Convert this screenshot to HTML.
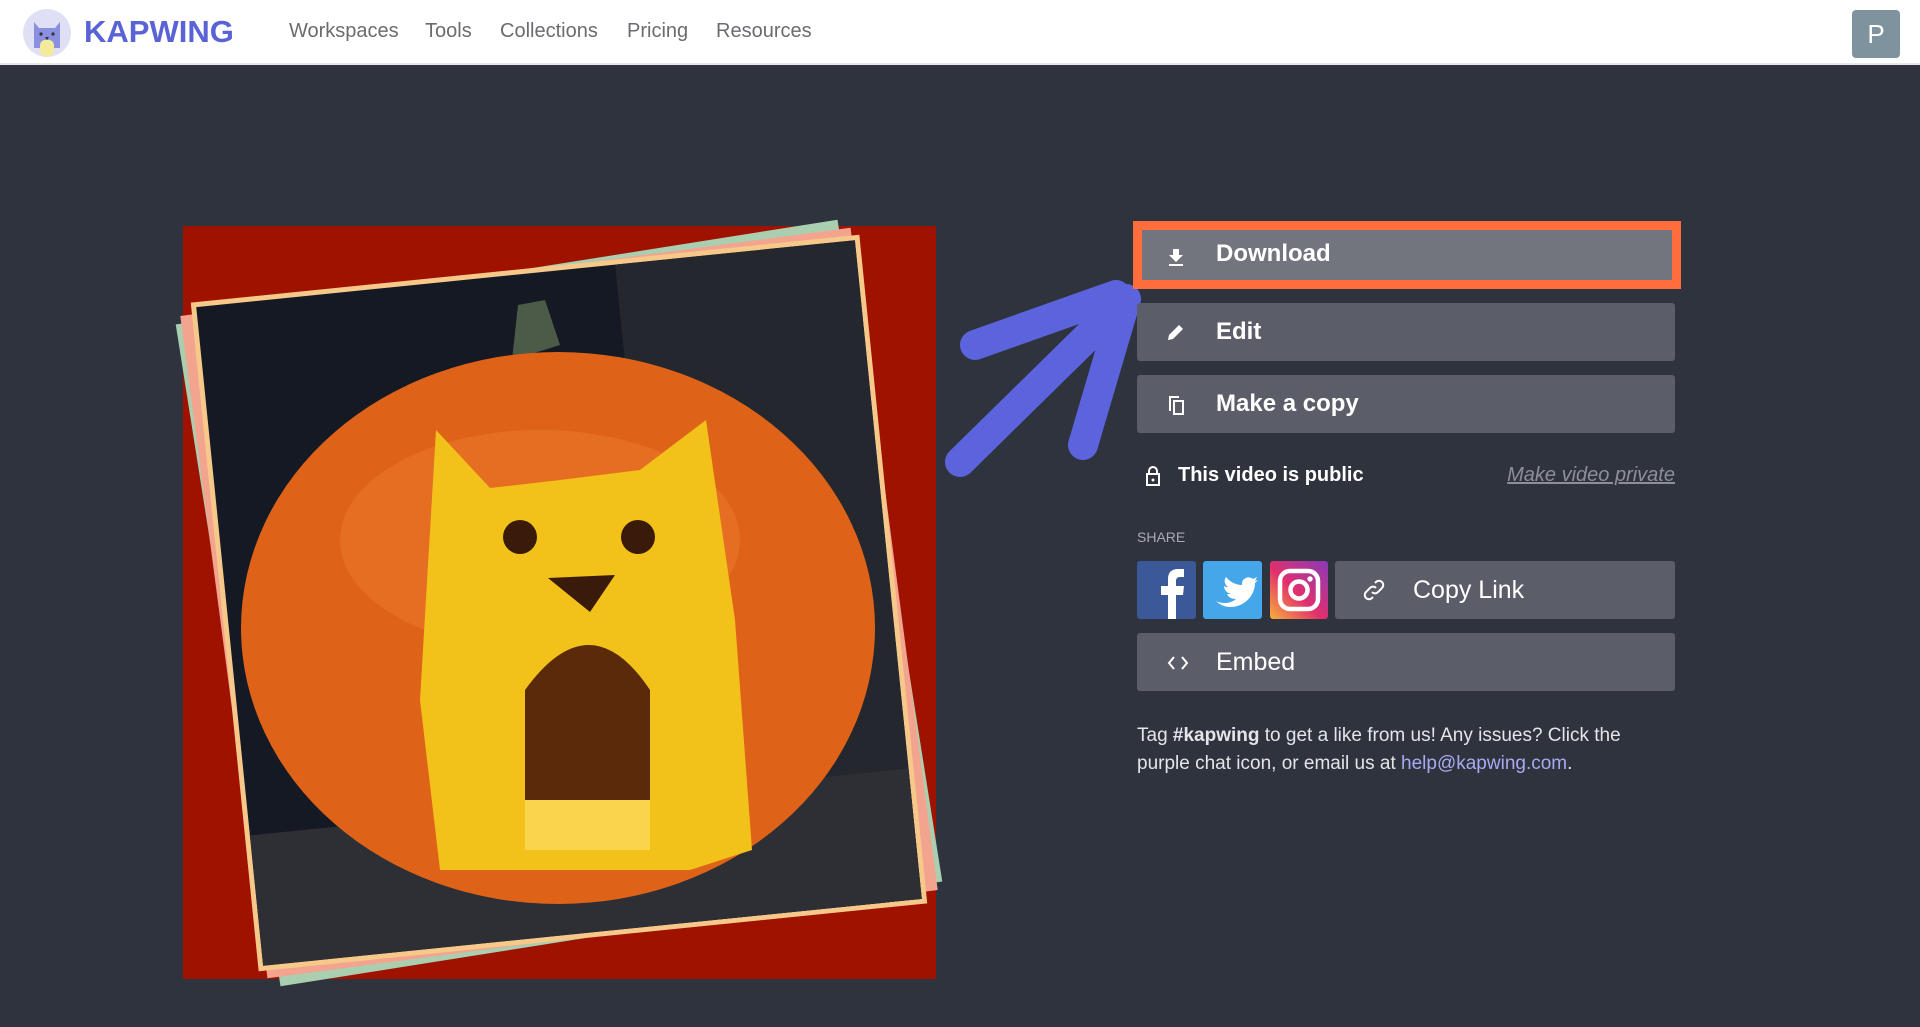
<!DOCTYPE html>
<html><head><meta charset="utf-8"><style>
*{margin:0;padding:0;box-sizing:border-box}
body{width:1920px;height:1027px;background:#2f333e;font-family:"Liberation Sans",sans-serif;position:relative;overflow:hidden}
.hdr{position:absolute;left:0;top:0;width:1920px;height:65px;background:#fff;border-bottom:2px solid #e6e8ee}
.logo{position:absolute;left:84px;top:14px;font-size:31px;font-weight:bold;color:#5a63d6}
.nav{position:absolute;top:20px;font-size:20px;color:#6b6b70}
.av{position:absolute;left:1852px;top:10px;width:48px;height:48px;background:#7e939e;border-radius:4px;color:#fff;font-size:26px;text-align:center;line-height:48px}
.btn{position:absolute;left:1137px;width:538px;height:58px;background:#5b5e69;border-radius:3px;color:#fff;font-size:24px;font-weight:bold}
.btn span{position:absolute;left:79px;top:15px}
.btn svg{position:absolute;left:29px;top:19px}
.txt{position:absolute;color:#fff}
</style></head><body>
<div class="hdr">
<svg style="position:absolute;left:22px;top:8px" width="50" height="50" viewBox="0 0 50 50"><circle cx="25" cy="25" r="24" fill="#dfe0f6"/><path d="M12 14 L17 20 L33 20 L38 14 L38 40 L12 40 Z" fill="#8a8fe0"/><rect x="18" y="32" width="14" height="16" rx="5" fill="#f4eb9a"/><circle cx="19" cy="26" r="1.6" fill="#333"/><circle cx="31" cy="26" r="1.6" fill="#333"/><path d="M23 29 L27 29 L25 32Z" fill="#333"/></svg>
<div class="logo">KAPWING</div>
<div class="nav" style="left:289px">Workspaces</div>
<div class="nav" style="left:425px">Tools</div>
<div class="nav" style="left:500px">Collections</div>
<div class="nav" style="left:627px">Pricing</div>
<div class="nav" style="left:716px">Resources</div>
<div class="av">P</div>
</div>

<svg style="position:absolute;left:0;top:0" width="1920" height="1027">
<rect x="183" y="226" width="753" height="753" fill="#a01200"/>
<g transform="translate(559,603)">
<g transform="rotate(-9)"><rect x="-335" y="-335" width="670" height="670" fill="#a9cfb0"/></g>
<g transform="rotate(-7.5)"><rect x="-338" y="-334" width="676" height="668" fill="#f2a48f"/></g>
<g transform="rotate(-5.8)">
<rect x="-336" y="-336" width="672" height="672" fill="#f6c98a"/>
<rect x="-331" y="-331" width="662" height="662" fill="#151923"/>
<rect x="90" y="-331" width="241" height="662" fill="#25272e"/>
<rect x="-331" y="200" width="662" height="131" fill="#2e2f34"/>
</g></g>
<path d="M512 360 L518 305 L545 300 L560 345 Z" fill="#4c5a48"/>
<ellipse cx="558" cy="628" rx="317" ry="276" fill="#de6319"/>
<ellipse cx="540" cy="540" rx="200" ry="110" fill="#ec7a2c" opacity=".5"/>
<path d="M436 430 L490 488 L560 480 L640 470 L706 420 L735 620 L752 850 L690 870 L440 870 L420 700 Z" fill="#f2c21a"/>
<path d="M525 690 Q590 600 650 690 L650 810 L525 810 Z" fill="#5a2a0a"/>
<rect x="525" y="800" width="125" height="50" fill="#fbd44e"/>
<circle cx="520" cy="537" r="17" fill="#3a1a08"/><circle cx="638" cy="537" r="17" fill="#3a1a08"/>
<path d="M548 578 L615 575 L590 612 Z" fill="#3a1a08"/>
<path d="M1116 295 L975 345 M1126 299 L960 462 M1126 299 L1083 445" stroke="#5b64dc" stroke-width="30" stroke-linecap="round" fill="none"/>
</svg>

<div style="position:absolute;left:1133px;top:221px;width:548px;height:68px;border:9px solid #ff6d3a;background:#72757e"></div>
<div class="txt" style="left:1216px;top:240px;font-size:24px;font-weight:bold">Download</div>
<svg style="position:absolute;left:1166px;top:247px" width="20" height="20" viewBox="0 0 20 20"><path d="M7 2h6v6h4l-7 7-7-7h4z M3 17h14v2H3z" fill="#fff"/></svg>

<div class="btn" style="top:303px"><svg width="20" height="20" viewBox="0 0 20 20"><path d="M2 18l1-5L13 3l4 4L7 17z" fill="#fff"/></svg><span>Edit</span></div>
<div class="btn" style="top:375px"><svg width="22" height="22" viewBox="0 0 22 22"><path d="M3 2h10v2H5v13H3z M7 6h11v15H7z M9 8v11h7V8z" fill="#fff"/></svg><span>Make a copy</span></div>

<svg style="position:absolute;left:1145px;top:465px" width="16" height="22" viewBox="0 0 16 22"><path d="M4 9V6a4 4 0 018 0v3" stroke="#fff" stroke-width="2" fill="none"/><rect x="2" y="9" width="12" height="11" stroke="#fff" stroke-width="2" fill="none"/><circle cx="8" cy="15" r="1.5" fill="#fff"/></svg>
<div class="txt" style="left:1178px;top:464px;font-size:20px;font-weight:bold">This video is public</div>
<div class="txt" style="right:245px;top:464px;font-size:20px;font-style:italic;text-decoration:underline;color:#8c8f98">Make video private</div>

<div class="txt" style="left:1137px;top:529px;font-size:14px;color:#a9abb2">SHARE</div>
<svg style="position:absolute;left:1137px;top:561px" width="192" height="58">
<rect x="0" y="0" width="59" height="58" rx="3" fill="#3b5998"/>
<path d="M31 58V34h-7v-9h7v-7c0-7 4-10 10-10h6v8h-4c-3 0-4 2-4 4v5h8l-1 9h-7v24z" fill="#fff"/>
<rect x="66" y="0" width="59" height="58" rx="3" fill="#45a6ea"/>
<path d="M79 40c6 3 14 3 20-2-6 0-8-3-9-5h4c-4-1-7-4-7-8 1 1 3 1 4 1-4-3-4-7-2-10 4 5 10 8 16 8-1-6 6-10 11-6l4-2-2 4 3-1-3 3c0 12-10 24-25 24-5 0-10-2-14-6z" fill="#fff"/>
<defs><linearGradient id="ig" x1="0" y1="1" x2="1" y2="0"><stop offset="0" stop-color="#f9b03b"/><stop offset=".45" stop-color="#e1306c"/><stop offset="1" stop-color="#8a3ab9"/></linearGradient></defs>
<rect x="133" y="0" width="58" height="58" rx="3" fill="url(#ig)"/>
<rect x="143" y="10" width="38" height="38" rx="10" stroke="#fff" stroke-width="4.5" fill="none"/>
<circle cx="162" cy="29" r="8.5" stroke="#fff" stroke-width="4.5" fill="none"/><circle cx="173" cy="18" r="2.7" fill="#fff"/>
</svg>
<div class="btn" style="top:561px;left:1335px;width:340px"><svg width="24" height="24" viewBox="0 0 24 24" style="left:27px;top:17px"><path d="M10 14a4 4 0 006 0l4-4a4 4 0 00-6-6l-1 1 M14 10a4 4 0 00-6 0l-4 4a4 4 0 006 6l1-1" stroke="#fff" stroke-width="2" fill="none"/></svg><span style="left:78px;font-weight:normal;font-size:25px">Copy Link</span></div>
<div class="btn" style="top:633px"><svg width="24" height="20" viewBox="0 0 24 20" style="top:20px"><path d="M8 4L3 10l5 6 M16 4l5 6-5 6" stroke="#fff" stroke-width="2" fill="none"/></svg><span style="font-weight:normal;font-size:25px">Embed</span></div>

<div class="txt" style="left:1137px;top:722px;font-size:19px;line-height:28px;color:#e4e5e8;width:540px">Tag <b>#kapwing</b> to get a like from us! Any issues? Click the purple chat icon, or email us at <span style="color:#a8aaf0">help@kapwing.com</span>.</div>
</body></html>
